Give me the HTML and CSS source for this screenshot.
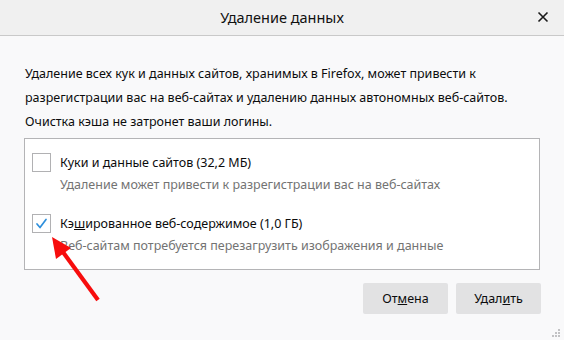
FILE: index.html
```html
<!DOCTYPE html>
<html lang="ru">
<head>
<meta charset="utf-8">
<title>Удаление данных</title>
<link rel="stylesheet" href="styles.css">
</head>
<body>
<div class="dialog">
  <header class="titlebar">
    <span class="title">Удаление данных</span>
    <span class="close" aria-label="Закрыть">
      <svg width="12" height="12" viewBox="0 0 12 12"><path d="M1.5 1.5 L10.5 10.5 M10.5 1.5 L1.5 10.5" stroke="#1a1a1a" stroke-width="1.6" fill="none"/></svg>
    </span>
  </header>
  <main class="content">
    <p class="intro">Удаление всех кук и данных сайтов, хранимых в Firefox, может привести к<br>разрегистрации вас на веб-сайтах и удалению данных автономных веб-сайтов.</p>
    <p class="intro">Очистка кэша не затронет ваши логины.</p>
    <div class="options">
      <div class="option">
        <div class="option-row">
          <span class="checkbox"></span>
          <span class="label">Куки и <u>д</u>анные сайтов (32,2 МБ)</span>
        </div>
        <div class="desc">Удаление может привести к разрегистрации вас на веб-сайтах</div>
      </div>
      <div class="option">
        <div class="option-row">
          <span class="checkbox checked">
            <svg width="17" height="17" viewBox="0 0 17 17"><path d="M4 9 L7 12.5 L13 4.5" stroke="#2d8fdc" stroke-width="1.7" fill="none" stroke-linecap="round" stroke-linejoin="round"/></svg>
          </span>
          <span class="label">Кэ<u>ш</u>ированное веб-содержимое (1,0 ГБ)</span>
        </div>
        <div class="desc">Веб-сайтам потребуется перезагрузить изображения и данные</div>
      </div>
    </div>
    <div class="actions">
      <button class="btn">От<u>м</u>ена</button>
      <button class="btn">Удал<u>и</u>ть</button>
    </div>
  </main>
  <svg class="arrow" width="564" height="340" viewBox="0 0 564 340">
    <line x1="98" y1="300" x2="60" y2="248" stroke="#f70d0d" stroke-width="4.2"/>
    <polygon points="52,237 71,248 56,259" fill="#f70d0d"/>
  </svg>
  <svg class="grip" width="9" height="9" viewBox="0 0 9 9">
    <g fill="#c2c2c4">
      <rect x="6" y="0" width="2" height="2"/>
      <rect x="3" y="3" width="2" height="2"/><rect x="6" y="3" width="2" height="2"/>
      <rect x="0" y="6" width="2" height="2"/><rect x="3" y="6" width="2" height="2"/><rect x="6" y="6" width="2" height="2"/>
    </g>
  </svg>
</div>
</body>
</html>
```

FILE: styles.css
```css
* { box-sizing: border-box; }
html, body { margin: 0; padding: 0; }
body {
  width: 564px;
  height: 340px;
  overflow: hidden;
  background: #f9f9fa;
  font-family: "Noto Sans", "Open Sans", sans-serif;
  font-size: 12.5px;
  color: #0c0c0d;
}
.dialog {
  position: relative;
  width: 564px;
  height: 340px;
  display: flex;
  flex-direction: column;
}
.titlebar {
  height: 36px;
  background: #f0f0f0;
  border-bottom: 1px solid #c9c9c9;
  display: flex;
  align-items: center;
  justify-content: center;
  position: relative;
}
.title {
  font-size: 14.5px;
  color: #111;
  margin-top: -1px;
}
.close {
  position: absolute;
  right: 15px;
  top: 11px;
  width: 12px;
  height: 12px;
  display: flex;
}
.content {
  padding: 26px 23px 0 25px;
  display: flex;
  flex-direction: column;
}
.intro {
  margin: 0;
  line-height: 24px;
  white-space: nowrap;
}
.options {
  margin: 4px 1px 0 -1px;
  background: #fff;
  border: 1px solid #b4b4b6;
  padding: 13px 7px 12px 7px;
  display: flex;
  flex-direction: column;
  gap: 17px;
}
.option-row {
  display: flex;
  align-items: center;
  gap: 9px;
  height: 20px;
}
.checkbox {
  width: 19px;
  height: 19px;
  border: 1px solid #b1b1b3;
  background: #fff;
  display: flex;
  align-items: center;
  justify-content: center;
  flex: none;
}
.label { color: #0c0c0d; }
.desc {
  color: #737373;
  margin-left: 28px;
  margin-top: 2px;
  line-height: 22px;
}
.actions {
  display: flex;
  justify-content: flex-end;
  gap: 8px;
  margin-top: 13px;
}
.btn {
  width: 85px;
  height: 31px;
  border: none;
  border-radius: 2px;
  background: #e2e2e3;
  font-family: inherit;
  font-size: 12.5px;
  color: #0c0c0d;
  padding: 0;
}
.arrow {
  position: absolute;
  left: 0;
  top: 0;
  pointer-events: none;
}
.grip {
  position: absolute;
  right: 3px;
  bottom: 2px;
}
```
